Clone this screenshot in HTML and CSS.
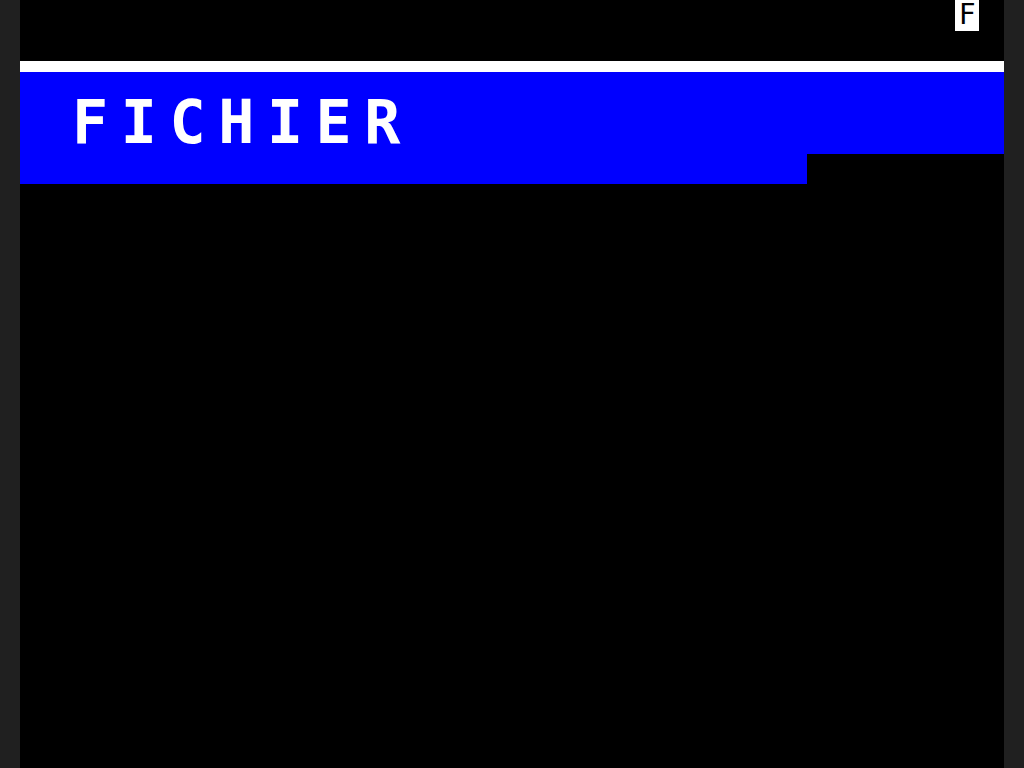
FILE: index.html
```html
<!DOCTYPE html>
<html lang="fr">
<head>
<meta charset="utf-8">
<title>Minitel - Fichier</title>
<link rel="stylesheet" href="styles.css">
</head>
<body>
<div class="screen">
  <div class="row status-row">
    <span class="status-cell">F</span>
  </div>
  <div class="row"></div>
  <div class="band">
    <div class="band-stripe"></div>
    <div class="band-body">
      <h1 class="title">FICHIER</h1>
    </div>
  </div>
  <div class="band-tail"></div>
</div>
</body>
</html>
```
FILE: styles.css
```css
html, body {
  margin: 0;
  padding: 0;
  background: #202020;
  height: 768px;
  overflow: hidden;
}

.screen {
  width: 984px;
  height: 768px;
  margin: 0 auto;
  background: #000;
  display: flex;
  flex-direction: column;
}

.row {
  height: 30.72px;
  flex: none;
}

.status-row {
  display: flex;
  justify-content: flex-end;
  padding-right: 24.6px;
}

.status-cell {
  width: 24.6px;
  height: 30.72px;
  background: #fff;
  color: #000;
  font-family: "DejaVu Sans Mono", monospace;
  font-size: 28px;
  line-height: 28px;
  display: flex;
  align-items: center;
  justify-content: center;
}

.band {
  height: 92.16px;
  flex: none;
  display: flex;
  flex-direction: column;
}

.band-stripe {
  height: 10.24px;
  background: #fff;
  flex: none;
}

.band-body {
  flex: 1;
  background: #0000ff;
  padding-top: 20.48px;
}

.title {
  margin: 0;
  padding-left: 52px;
  height: 61.44px;
  color: #fff;
  font-family: "DejaVu Sans Mono", monospace;
  font-weight: bold;
  font-size: 60px;
  line-height: 61.44px;
  letter-spacing: 12.6px;
  white-space: nowrap;
}

.band-tail {
  width: 787.2px;
  height: 30.72px;
  background: #0000ff;
  flex: none;
}
```
